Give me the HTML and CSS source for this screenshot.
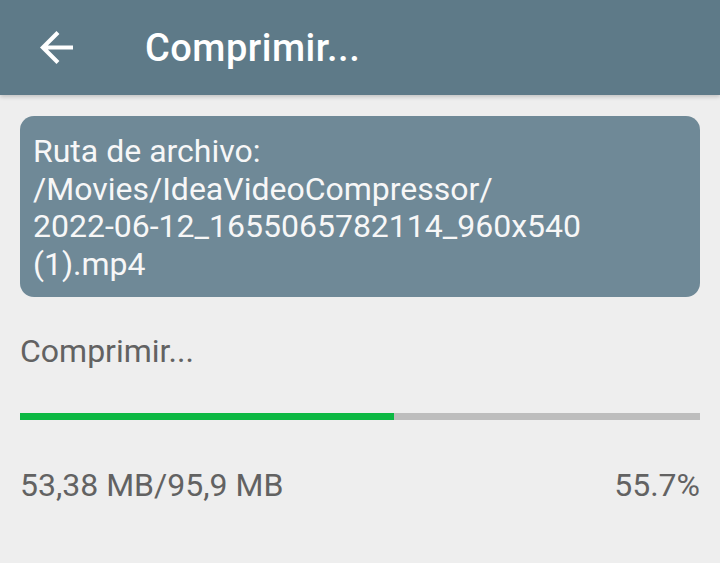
FILE: index.html
```html
<!DOCTYPE html>
<html lang="es">
<head>
<meta charset="utf-8">
<title>Comprimir...</title>
<link rel="stylesheet" href="styles.css">
</head>
<body>
<header class="appbar">
  <button class="back" aria-label="Atrás">
    <svg width="33" height="33" viewBox="4 4 16 16" aria-hidden="true"><path fill="#ffffff" d="M20 11H7.83l5.59-5.59L12 4l-8 8 8 8 1.41-1.41L7.83 13H20v-2z"/></svg>
  </button>
  <h1 class="title">Comprimir...</h1>
</header>
<main class="content">
  <div class="card">
    <div>Ruta de archivo:</div>
    <div>/Movies/IdeaVideoCompressor/</div>
    <div>2022-06-12_1655065782114_960x540</div>
    <div>(1).mp4</div>
  </div>
  <div class="status">Comprimir...</div>
  <div class="progress"><div class="progress-fill" style="width:55%"></div></div>
  <div class="stats">
    <span>53,38 MB/95,9 MB</span>
    <span>55.7%</span>
  </div>
</main>
</body>
</html>
```
FILE: styles.css
```css
* { box-sizing: border-box; }
html, body { margin: 0; padding: 0; }
body {
  width: 720px;
  height: 563px;
  background: #eeeeee;
  font-family: Roboto, "Noto Sans", sans-serif;
  overflow: hidden;
}
.appbar {
  height: 95px;
  background: #5e7a88;
  display: flex;
  align-items: center;
  box-shadow: 0 2px 4px rgba(0,0,0,0.18);
  position: relative;
}
.back {
  background: none;
  border: 0;
  padding: 0;
  margin: 0 0 0 40px;
  width: 33px;
  height: 33px;
  display: flex;
}
.title {
  margin: 0 0 0 72px;
  font-size: 38px;
  font-weight: 500;
  color: #ffffff;
  letter-spacing: 0.5px;
}
.content {
  padding: 21px 20px 0 20px;
}
.card {
  background: #6f8997;
  border-radius: 14px;
  padding: 17px 13px 14px 13px;
  color: #f7f7f7;
  font-size: 32px;
  line-height: 37.5px;
}
.status {
  margin-top: 36px;
  font-size: 32px;
  line-height: 37.5px;
  color: #626262;
}
.progress {
  margin-top: 42px;
  height: 7px;
  background: #bdbdbd;
  display: flex;
}
.progress-fill {
  background: #0cb843;
}
.stats {
  margin-top: 47px;
  display: flex;
  justify-content: space-between;
  font-size: 32px;
  line-height: 37.5px;
  color: #626262;
}
```
